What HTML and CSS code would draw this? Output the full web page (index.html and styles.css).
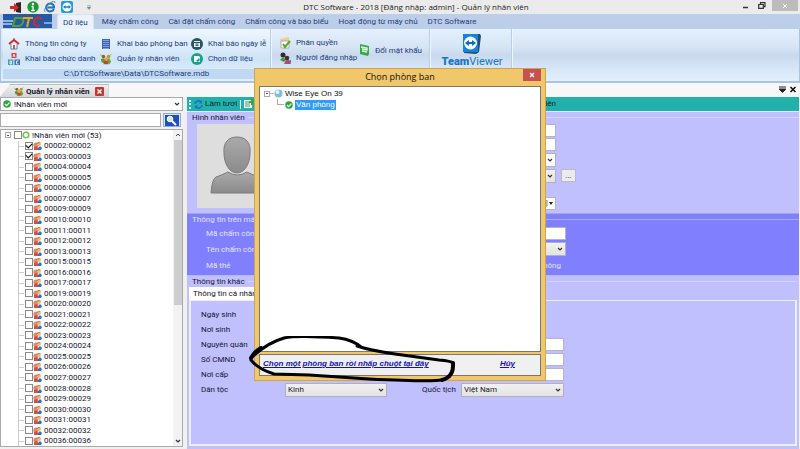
FILE: index.html
```html
<!DOCTYPE html>
<html lang="vi">
<head>
<meta charset="utf-8">
<meta name="viewport" content="width=device-width, initial-scale=1">
<title>DTC Software</title>
<link rel="stylesheet" href="styles.css">
</head>
<body>
<svg class="defs" aria-hidden="true">
  <symbol id="people" viewBox="0 0 14 12"><circle cx="4" cy="3" r="2" fill="#8a5a24"/><circle cx="10" cy="3" r="2" fill="#c98a38"/><path d="M1 6l3-1 3 2-1 4-4-1z" fill="#55a02c"/><path d="M8 6l3-1 2 4-2 3-3-2z" fill="#6ea831"/><circle cx="7" cy="6" r="2" fill="#e0a648"/><path d="M5 8h4l1 4H4z" fill="#c8433a"/><path d="M0 1l3 2M13 0l-2 3" stroke="#8fba45"/></symbol>
  <symbol id="person" viewBox="0 0 9 9"><circle cx="3" cy="4" r="2.600" fill="#e08a62"/><path d="M1 9V6l3-1 2 4z" fill="#dc4a42"/><circle cx="6" cy="3" r="2" fill="#f1b779"/><path d="M3 3q2-3 5-1l-2 0z" fill="#a5603c"/><path d="M5 7l2-2 2 2-1 2H5z" fill="#2878c8"/></symbol>
  <symbol id="ok" viewBox="0 0 10 10"><circle cx="5" cy="5" r="4.700" fill="#29a63c"/><path d="M2.500 5l2 2L8 3.300" fill="none" stroke="#fff" stroke-width="1.500"/></symbol>
  <symbol id="chevron" viewBox="0 0 6 6"><path d="M1 2l2 2 2-2" fill="none" stroke="#333" stroke-width="1.200"/></symbol>
</svg>
<div class="app">
  <header class="titlebar">
    <div class="quick">
      <svg width="12" height="11" viewBox="0 0 12 11"><path d="M6 1l5-1v11l-5-1z" fill="#2b2725"/><path d="M0 4h4V1l5 4.500L4 10V7H0z" fill="#d8262c"/></svg>
      <svg width="12" height="12" viewBox="0 0 12 12"><circle cx="6" cy="6" r="5.700" fill="#1b9a34"/><circle cx="6" cy="3" r="1.200" fill="#fff"/><path d="M4.500 5.500H6V9M4.200 9.500h3.600" stroke="#fff" stroke-width="1.300" fill="none"/></svg>
      <svg width="12" height="12" viewBox="0 0 12 12"><path d="M9.800 8A4 4 0 1 1 10 5.500v1H3.500" fill="none" stroke="#1e73be" stroke-width="2"/><path d="M1 11Q-1 8 5 3t6-1" fill="none" stroke="#3b8ed0"/></svg>
      <svg width="12" height="12" viewBox="0 0 12 12"><rect width="12" height="12" rx="2" fill="#1a9bea"/><circle cx="6" cy="6" r="4.500" fill="#fff"/><path d="M2 6l2.500-2v1.300h3V4L10 6 7.500 8V6.700h-3V8z" fill="#1a86d8"/></svg>
      <svg class="more" width="4" height="5" viewBox="0 0 4 5"><path d="M0 .5h4M0 2h4L2 4.500z" stroke="#8aa" stroke-width=".6" fill="#678"/></svg>
    </div>
    <h1>DTC Software - 2018 [Đăng nhập: admin] - Quản lý nhân viên</h1>
    <div class="winbtns">
      <button aria-label="Minimize"><svg width="6" height="7" viewBox="0 0 6 7"><path d="M0 5.500h5" stroke="#333" stroke-width="1.500"/></svg></button>
      <button aria-label="Restore"><svg width="8" height="7" viewBox="0 0 8 7"><path d="M2.500 2V.7H7v4H5.500M.7 2.500h4.600v3.800H.7z" fill="none" stroke="#333" stroke-width="1.200"/></svg></button>
      <button class="close" aria-label="Close"><svg width="6" height="6" viewBox="0 0 6 6"><path d="M1 1l4 4M5 1L1 5" stroke="#fff"/></svg></button>
    </div>
  </header>

  <nav class="tabs">
    <svg class="logo" width="49" height="15" viewBox="0 0 49 15"><path d="M0 0h49v14H0z" fill="#2359a6"/><path d="M0 6h10v2H0zM0 9h9v2H0z" fill="#8ab3df"/><path d="M41 8h8v2h-8z" fill="#79a7d8"/><g fill="none" stroke-width="2"><path d="M10 12l2-8h6q3 0 2 4t-5 4z" stroke="#5a9c2d"/><path d="M20 4h10M26 4l-2 9" stroke="#e7a51c"/><path d="M39 5q-2-2-5-1t-3 5 6 2" stroke="#cf2d2a"/></g></svg>
    <button class="on">Dữ liệu</button>
    <button>Máy chấm công</button>
    <button>Cài đặt chấm công</button>
    <button>Chấm công và báo biểu</button>
    <button>Hoạt động từ máy chủ</button>
    <button>DTC Software</button>
  </nav>

  <div class="ribbon">
    <section class="group data">
      <div class="cmds">
        <button><svg width="12" height="12" viewBox="0 0 12 12"><path d="M1 6l5-4 5 4" fill="none" stroke="#c8322b" stroke-width="2"/><path d="M3 6v5h6V6" fill="#fff" stroke="#697d9d"/><path d="M5 7h2v4H5z" fill="#d9534f"/><path d="M6 0v2" stroke="#c33"/></svg>Thông tin công ty</button>
        <button><svg width="12" height="12" viewBox="0 0 12 12"><path d="M2 1h8v10H2z" fill="#3f63b8"/><path d="M4 2v9M6 2v9M8 2v9" stroke="#c6d8f5" stroke-dasharray="1 1"/></svg>Khai báo phòng ban</button>
        <button><svg width="12" height="12" viewBox="0 0 12 12"><circle cx="6" cy="6" r="6" fill="#255463"/><path d="M3 3h6v6H3z" fill="#e9f3f4"/><path d="M3 4.500h6M4.500 6h3M4.500 7.500h3" stroke="#255463"/></svg>Khai báo ngày lễ</button>
        <button><svg width="12" height="12" viewBox="0 0 12 12"><path d="M3.500 0h5v5h-5z" fill="#d9443d"/><path d="M0 6.500h5.300V12H0z" fill="#3da5a3"/><path d="M6.500 6.500H12V12H6.500z" fill="#3872c4"/><path d="M5 4l1-3 1 3M2 8v3h1.500V8zM10.500 8H8.500v3h2" fill="none" stroke="#fff" stroke-width=".8"/></svg>Khai báo chức danh</button>
        <button><svg width="12" height="12"><use href="#people"/></svg>Quản lý nhân viên</button>
        <button><svg width="12" height="12" viewBox="0 0 12 12"><circle cx="6" cy="6" r="6" fill="#12a58c"/><path d="M3 3h5l1 1v5H3z" fill="#fff"/><path d="M5 8l3-3 1 2-2 2z" fill="#12a58c"/></svg>Chọn dữ liệu</button>
      </div>
      <p class="path">C:\DTCSoftware\Data\DTCSoftware.mdb</p>
    </section>
    <section class="group access">
      <div class="stack">
        <button><svg width="12" height="12" viewBox="0 0 12 12"><path d="M1 2l9-2v8l-8 1z" fill="#f0cf8c"/><path d="M2 4h8v7H2z" fill="#fff" stroke="#aab"/><path d="M4 7l2 3 5-6" fill="none" stroke="#55a82c" stroke-width="2"/></svg>Phân quyền</button>
        <button><svg width="12" height="12" viewBox="0 0 12 12"><circle cx="4" cy="3" r="2.500" fill="#332a2a"/><path d="M1 8l3-3 3 3-2 2z" fill="#3e9a43"/><circle cx="8" cy="6" r="2.300" fill="#4b2a2b"/><path d="M5 12l2-4h3l2 4z" fill="#ce3d6b"/><path d="M9 9l3-1v3z" fill="#3374c8"/></svg>Người đăng nhập</button>
      </div>
      <button><svg width="11" height="12" viewBox="0 0 11 12"><path d="M1 0l9 2v8l-1 2-8-2z" fill="#35a94c"/><path d="M2 3l6 1v2L3 5M3 7l5 1" fill="none" stroke="#e8ffe9" stroke-width="1.300"/></svg>Đổi mật khẩu</button>
    </section>
    <section class="group">
      <button class="tv"><svg width="20" height="22" viewBox="0 0 20 22"><path d="M4 1h14l1 2-2 16-3 2-12-1z" fill="#214b78"/><path d="M1 1h15v18H1z" fill="#1684d9"/><circle cx="8.500" cy="10" r="6.500" fill="#f4faff"/><path d="M3 10l4-3v2h3V7l4 3-4 3v-2H7v2z" fill="#1669b4"/></svg><span><b>Team</b>Viewer</span></button>
    </section>
  </div>

  <div class="doctabs">
    <div class="doctab"><svg width="10" height="9"><use href="#people"/></svg><span>Quản lý nhân viên</span>
      <button aria-label="Close tab"><svg width="9" height="9" viewBox="0 0 9 9"><rect width="9" height="9" rx="1" fill="#c83632"/><path d="M2.500 2.500l4 4M6.500 2.500l-4 4" stroke="#fff" stroke-width="1.400"/></svg></button></div>
    <svg class="doctools" width="18" height="8" viewBox="0 0 18 8"><path d="M0 1h7M0 3h7L3.500 6.500z" stroke="#222" stroke-width="1" fill="#222"/><path d="M11.500 1l5 5M16.500 1l-5 5" stroke="#111" stroke-width="1.600"/></svg>
  </div>

  <main class="work">
    <aside class="side">
      <div class="combo"><svg width="8" height="8"><use href="#ok"/></svg><select aria-label="Nhóm"><option>!Nhân viên mới</option></select><svg class="arrow" width="6" height="6"><use href="#chevron"/></svg></div>
      <div class="search"><input type="text" aria-label="Tìm"><button aria-label="Tìm"><svg width="14" height="11" viewBox="0 0 14 11"><path d="M0 0h14v11H0z" fill="#1d50bd"/><circle cx="5" cy="4" r="2.800" fill="#cfe4ff" stroke="#fff"/><path d="M7 6l4 4" stroke="#fff" stroke-width="2"/></svg></button></div>
      <div class="tree">
        <ul id="staff">
          <li class="root"><i class="exp"></i><input type="checkbox" id="all"><svg width="8" height="8" viewBox="0 0 8 8"><circle cx="4" cy="4" r="2.800" fill="#fff" stroke="#7cc04b" stroke-width="1.600"/></svg><label for="all">!Nhân viên mới (53)</label></li>
        </ul>
        <div class="scroll"><svg width="6" height="6"><path d="M1 4l2-2 2 2" fill="none" stroke="#444"/></svg><i></i><svg width="6" height="6"><use href="#chevron"/></svg></div>
      </div>
    </aside>

    <section class="detail">
      <div class="toolbar"><i class="grip"></i><button><svg width="9" height="9" viewBox="0 0 9 9"><path d="M1 4a3.500 3.500 0 0 1 6-2M8 5a3.500 3.500 0 0 1-6 2" fill="none" stroke="#1f6fc6" stroke-width="1.600"/><path d="M8 0v3.500H5zM1 9V5.500h3z" fill="#1f6fc6"/></svg>Làm tươi</button><i class="sep"></i><svg width="10" height="10" viewBox="0 0 10 10"><path d="M0 1h8v8H0z" fill="#eef5ee"/><path d="M1 3h4M1 5h5M1 7h5" stroke="#6a8f86"/><path d="M8 0v6M5 3h5" stroke="#3ba52e" stroke-width="2"/></svg><span class="last">viên</span></div>

      <div class="box photo">
        <h2>Hình nhân viên</h2>
        <div class="photorow">
          <svg class="avatar" width="80" height="84" viewBox="0 0 80 84"><defs><linearGradient id="g" x2="0" y2="1"><stop stop-color="#aaa"/><stop offset="1" stop-color="#8b8b8b"/></linearGradient></defs><path d="M0 0h80v84H0z" fill="#dedede"/><g fill="url(#g)" stroke="#7b7b7b"><path d="M14 69q1-14 5-16 6-2 12-5 9 6 19 0 6 3 12 5 4 2 5 16z"/><path d="M40 13c-9 0-14 6-13 16 0 10 5 20 13 20s13-10 13-20c1-10-4-16-13-16z"/></g></svg>
          <div class="fields">
            <input type="text" aria-label="Trường 1"><input type="text" aria-label="Trường 2">
            <div class="sel white"><select aria-label="Trường 3"><option></option></select><svg width="6" height="6"><use href="#chevron"/></svg></div>
            <div class="sel"><select aria-label="Trường 4"><option></option></select><svg width="6" height="6"><use href="#chevron"/></svg></div>
            <button class="dots">...</button>
            <div class="date"><input type="text" aria-label="Trường 5"><svg width="9" height="7" viewBox="0 0 9 7"><path d="M0 0h3v6H0" fill="#ddd" stroke="#888"/><path d="M5 2h4L7 5z" fill="#222"/></svg></div>
          </div>
        </div>
      </div>

      <div class="box machine">
        <h2>Thông tin trên máy</h2>
        <div class="mgrid">
          <label for="mcc">Mã chấm công</label><input id="mcc" type="text">
          <label for="tcc">Tên chấm công</label><div class="sel"><select id="tcc"><option></option></select><svg width="6" height="6"><use href="#chevron"/></svg></div>
          <span>Mã thẻ</span><span class="no">Không</span>
        </div>
      </div>

      <div class="box other">
        <h2>Thông tin khác</h2>
        <button class="subtab">Thông tin cá nhân</button>
        <div class="pane">
          <div class="pgrid">
            <label for="a1">Ngày sinh</label><input id="a1" type="text"><i></i><i></i>
            <label for="a2">Nơi sinh</label><input id="a2" type="text"><i></i><i></i>
            <label for="a3">Nguyên quán</label><input id="a3" type="text"><i></i><input type="text" aria-label="Mục 3">
            <label for="a4">Số CMND</label><input id="a4" type="text"><i></i><input type="text" aria-label="Mục 4">
            <label for="a5">Nơi cấp</label><input id="a5" type="text"><i></i><input type="text" aria-label="Mục 5">
            <label for="a6">Dân tộc</label><div class="sel"><select id="a6"><option>Kinh</option></select><svg width="6" height="6"><use href="#chevron"/></svg></div>
            <label for="a7">Quốc tịch</label><div class="sel"><select id="a7"><option>Việt Nam</option></select><svg width="6" height="6"><use href="#chevron"/></svg></div>
          </div>
        </div>
      </div>
    </section>
  </main>

  <div class="dialog" role="dialog" aria-labelledby="dlg">
    <header><h2 id="dlg">Chọn phòng ban</h2><button aria-label="Close dialog"><svg width="6" height="6" viewBox="0 0 6 6"><path d="M1 1l4 4M5 1L1 5" stroke="#fff" stroke-width="1.200"/></svg></button></header>
    <ul class="dept">
      <li><i class="exp"></i><i class="dash"></i><svg width="9" height="9" viewBox="0 0 9 9"><circle cx="4.500" cy="4.500" r="4" fill="#7dbfdc"/><circle cx="3.500" cy="3" r="2" fill="#dff3fb"/></svg><span>Wise Eye On 39</span></li>
      <li class="child"><i class="elbow"></i><svg width="8" height="8"><use href="#ok"/></svg><span class="picked">Văn phòng</span></li>
    </ul>
    <footer><a href="#chon">Chọn một phòng ban rồi nhấp chuột tại đây</a><a href="#huy">Hủy</a></footer>
    <svg class="ink" width="210" height="54" viewBox="0 0 210 54" fill="none" stroke="#000" stroke-linecap="round" stroke-linejoin="round"><path d="M3 21Q18 7 35 2Q48-1 90 2Q104 4 112 11L108 10Q120 14 146 18L190 24Q202 25 204 27" stroke-width="3"/><path d="M204 27Q205 41 193 44" stroke-width="4"/><path d="M193 44Q183 46 120 43L60 39L25 38Q9 33 2 24" stroke-width="3"/><path d="M2 22Q6 15 12 12" stroke-width="4"/></svg>
  </div>
</div>
<script src="tree.js"></script>
</body>
</html>
```
FILE: styles.css
```css
* { box-sizing: border-box; }
body { margin: 0; font: 8px/11px Roboto, "Liberation Sans", sans-serif; color: #16162c; }
h1, h2, p, ul { margin: 0; padding: 0; font-weight: normal; }
ul { list-style: none; }
button, input, select { font: inherit; color: inherit; margin: 0; padding: 0; border: 0; background: none; border-radius: 0; }
button { white-space: nowrap; }
svg { display: block; flex: none; }
select { appearance: none; width: 100%; height: 100%; }
.defs { position: absolute; width: 0; height: 0; }
.app { position: relative; display: flex; flex-direction: column; height: 100vh; min-height: 420px; overflow: hidden; background: #f0f0f0; }

.titlebar { display: grid; grid-template-columns: 1fr auto 1fr; height: 14px; align-items: center; background: #ebebeb; }
.quick { display: flex; gap: 5px; padding-left: 10px; align-items: center; }
.more { margin-left: 9px; }
.titlebar h1 { font: 8px/14px "Open Sans", sans-serif; color: #222; padding-left: 32px; }
.winbtns { display: flex; justify-content: flex-end; align-self: start; align-items: center; gap: 9px; padding-right: 2px; height: 11px; }
.winbtns .close { background: #bcbcbc; width: 26px; height: 11px; display: grid; place-items: center; margin-left: -3px; }

.tabs { display: flex; height: 15px; background: #bdcfe8; padding-left: 3px; color: #1e3c7b; }
.tabs button { padding: 0 5px; line-height: 15px; color: #1e3c7b; }
.tabs .on { background: #eaf3fd; border: 1px solid #d8e4f4; border-bottom: 0; border-radius: 3px 3px 0 0; line-height: 13px; margin: 0 3px 0 5px; }

.ribbon { display: flex; gap: 3px; height: 54px; padding: 0 1px 2px 2px; border: solid #a9c3e2; border-width: 0 1px 2px; background: linear-gradient(#e5f0fe, #d6e4f4 35%, #c9d9ed 50%, #d6e6f7 75%, #e2effc); }
.group { display: flex; border-right: 1px solid #b7cde8; box-shadow: 1px 0 #edf5fe; color: #1e3c7b; }
.group button { display: flex; align-items: center; gap: 5px; color: #1e3c7b; text-align: left; }
.data { width: 268px; flex-direction: column; background: linear-gradient(#edf6ff, #d9ebfa 40%, #cde3f7 60%, #e2f3fe); }
.cmds { flex: 1; display: grid; grid-template-columns: 92px 91px 1fr; grid-auto-rows: 15px; padding: 7px 0 0 5px; }
.path { line-height: 10px; text-align: center; background: #c0d8f1; }
.access { width: 156px; padding: 7px 7px 15px 5px; align-items: center; justify-content: space-between; }
.stack { display: grid; grid-auto-rows: 15px; }
.group .tv { flex-direction: column; gap: 1px; width: 78px; padding-top: 4px; font: 11px/12px Roboto, sans-serif; color: #1677c4; }
.tv b { font-weight: 900; }

.doctabs { display: flex; height: 14px; justify-content: space-between; align-items: end; background: #f7f7f7; }
.doctab { display: flex; align-items: center; gap: 2px; height: 13px; padding: 0 4px 0 13px; background: linear-gradient(#eee, #d5d5d5); border: 1px solid #bbb; border-bottom: 0; clip-path: polygon(10px 0, 100% 0, 100% 100%, 0 100%); font-weight: bold; }
.doctab button { margin-left: 3px; }
.doctools { margin: 0 3px 3px 0; }

.work { flex: 1; min-height: 0; display: flex; gap: 4px; }
.side { width: 183px; flex: none; display: flex; flex-direction: column; gap: 2px; padding-bottom: 2px; background: #f0f0f0; }
.combo { display: flex; align-items: center; gap: 3px; height: 14px; border: 1px solid #aaa; padding: 0 2px; background: #fff; }
.search { display: flex; gap: 2px; height: 14px; }
.search input { flex: 1; min-width: 0; background: #fff; border: 1px solid #aaa; }
.search button { width: 18px; margin-right: 2px; display: grid; place-items: center; border: 1px solid #8faadc; background: #dce8fa; }
.tree { flex: 1; min-height: 0; display: flex; background: #fff; border: 1px solid #aaa; }
.tree ul { flex: 1; display: flex; flex-direction: column; }
.tree li { flex: 1; min-height: 0; display: flex; align-items: center; position: relative; padding-left: 24px; white-space: nowrap; }
.tree .root { padding-left: 4px; }
.tree li label { padding-left: 2px; }
.tree li:not(.root)::before { content: ""; position: absolute; left: 17px; top: 0; bottom: 0; border-left: 1px solid #ccc; }
.tree li:not(.root)::after { content: ""; position: absolute; left: 17px; top: 50%; width: 6px; border-top: 1px solid #ccc; }
.tree input { appearance: none; display: grid; place-items: center; width: 8px; height: 8px; flex: none; border: 1px solid #888; background: #fff; }
.tree input:checked::after { content: ""; width: 5px; height: 3px; border: solid #000; border-width: 0 0 1px 1px; transform: rotate(-45deg); margin-top: -2px; }
.exp { width: 6px; height: 6px; flex: none; border: 1px solid #aaa; background: linear-gradient(#555, #555) center / 2px 1px no-repeat; }
.tree .exp { margin-right: 3px; }
.scroll { width: 9px; display: flex; flex-direction: column; align-items: center; justify-content: space-between; padding: 2px 0; background: #f2f2f2; }
.scroll i { width: 8px; height: 53%; margin: 2px 0 auto; background: #cdcdcd; }

.detail { flex: 1; min-width: 0; display: flex; flex-direction: column; margin-right: 1px; background: #c0c0ff; }
.toolbar { display: flex; align-items: center; gap: 3px; height: 15px; background: #20b2aa; border-bottom: 1px solid #e0e8f8; font: 8px/14px "Liberation Sans", sans-serif; padding-left: 2px; }
.toolbar button { display: flex; align-items: center; gap: 2px; }
.grip { width: 2px; height: 9px; border-left: 2px dotted #e6ffff; }
.sep { width: 1px; height: 9px; background: #d6f4f0; }
.toolbar .last { margin-left: 284px; }
.box h2 { display: flex; align-items: center; gap: 3px; align-self: stretch; font-size: 8px; line-height: 11px; padding-left: 5px; }
.box h2::after { content: ""; flex: 1; border-top: 1px solid #ffffff50; }
.photo { height: 102px; flex: none; border-bottom: 1px solid #a6a6d8; }
.photorow { display: flex; padding-left: 10px; }
.avatar { margin-top: 1px; }
.fields { margin-left: 175px; padding-top: 1px; display: grid; grid-template-columns: 104px 15px; gap: 1px 5px; grid-template-rows: 13px 13px 15px 15px 12px 13px; align-items: center; }
.fields > :nth-child(-n+4) { grid-column: 1; }
.fields .dots { grid-column: 2; grid-row: 4; height: 13px; background: #ececf0; border: 1px solid #bbb; line-height: 9px; }
.fields > input, .mgrid input, .pgrid input, .date { width: 100%; height: 13px; background: #fff; border: 1px solid #b4b4cc; }
.date { grid-row: 6; grid-column: 1; display: flex; align-items: center; padding-right: 2px; }
.date input { flex: 1; min-width: 0; }
.sel { position: relative; height: 14px; border: 1px solid #b0b0c0; background: linear-gradient(#f1f1f1, #e3e3e3); }
.sel.white { background: #fff; }
.sel select { padding-left: 2px; }
.sel svg { position: absolute; right: 2px; top: 3px; pointer-events: none; }

.machine { height: 62px; flex: none; background: #8080ff; color: #e2e2ff; border-bottom: 1px solid #b9b9e0; }
.mgrid { display: grid; grid-template-columns: 161px 199px; grid-auto-rows: 16px; align-items: center; padding: 0 0 0 19px; }
.no { text-align: right; padding-right: 5px; }

.other { flex: 1; min-height: 0; display: flex; flex-direction: column; align-items: flex-start; padding: 0 2px 3px; background: #c0c0ff; }
.other h2 { padding-left: 3px; }
.subtab { height: 13px; padding: 0 4px; background: #fff; line-height: 12px; }
.pane { flex: 1; align-self: stretch; border: 2px solid #eef; border-top-width: 1px; padding: 6px 0 0 10px; }
.pgrid { display: grid; grid-template-columns: 84px 102px 74px 103px; grid-auto-rows: 15px; align-items: center; }
.pgrid label:nth-last-of-type(1) { padding-left: 35px; }

.dialog { position: absolute; top: 68px; left: 0; right: 0; width: 292px; height: 313px; margin: 0 auto; display: flex; flex-direction: column; gap: 2px; padding: 0 4px 4px; background: #f0c76a; border: 1px solid #cba54f; color: #111; }
.dialog header { position: relative; height: 15px; text-align: center; }
.dialog h2 { font: 9px/16px "Open Sans", sans-serif; }
.dialog header button { position: absolute; right: 0; top: 0; width: 18px; height: 12px; display: grid; place-items: center; background: #c75050; }
.dept { flex: 1; background: #fff; border: 1px solid #777; padding: 1px 0 0 4px; font: 8px/11px "Liberation Sans", sans-serif; }
.dept li { display: flex; align-items: center; height: 11px; }
.dash { width: 4px; border-top: 1px solid #bbb; }
.dept span { padding: 0 2px; }
.dept .child { padding-left: 13px; }
.elbow { width: 7px; height: 6px; margin: -5px 1px 0 0; border: solid #aaa; border-width: 0 0 1px 1px; }
.dept .picked { background: #3399ff; color: #fff; margin-left: 2px; padding: 0 1px; line-height: 10px; }
.dialog footer { height: 22px; display: flex; justify-content: space-between; background: #f0f0f0; border: 1px solid #777; padding: 2px 25px 0 3px; font: italic bold 8px/13px "Liberation Sans", sans-serif; }
.dialog a { color: #1414b4; text-decoration: underline; }
.ink { position: absolute; left: -6px; top: 267px; pointer-events: none; }
```
FILE: tree.js
```js
const ids = [2, 3, 4, 5, 6, 7, 9, 10, 11, 12, 13, 15, 16, 17, 19, 20, 21, 22, 23, 24, 25, 26, 27, 28, 29, 30, 31, 32, 36];
const list = document.getElementById('staff');
for (const id of ids) {
  const code = String(id).padStart(5, '0');
  const row = document.createElement('li');
  row.innerHTML = `<input type="checkbox" id="s${code}" ${id < 4 ? 'checked' : ''}><svg width="9" height="9"><use href="#person"/></svg><label for="s${code}">${code}:${code}</label>`;
  list.append(row);
}
```
